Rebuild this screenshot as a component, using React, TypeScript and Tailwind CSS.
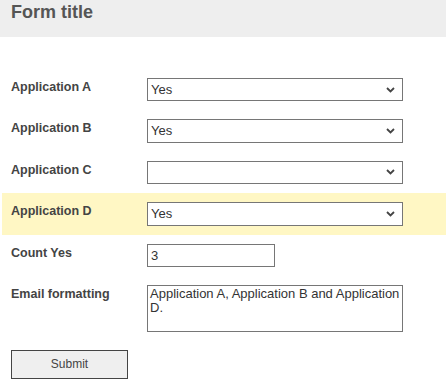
const font = { fontFamily: '"Liberation Sans", Arial, sans-serif' }

function Chevron() {
  return (
    <svg
      className="pointer-events-none absolute right-[8px] top-1/2 -translate-y-1/2"
      width="9"
      height="6"
      viewBox="0 0 9 6"
    >
      <path d="M1 1l3.5 3.5L8 1" fill="none" stroke="#444" strokeWidth="1.8" />
    </svg>
  )
}

function SelectBox({ value }: { value: string }) {
  return (
    <div className="relative w-[256px]">
      <select
        defaultValue={value}
        className="block h-[23.4px] w-full appearance-none border border-[#767676] bg-white pl-[3px] text-[13px] text-[#333] outline-none"
      >
        <option value=""></option>
        <option value="Yes">Yes</option>
        <option value="No">No</option>
      </select>
      <Chevron />
    </div>
  )
}

function Row({
  label,
  highlight,
  children,
}: {
  label: string
  highlight?: boolean
  children: React.ReactNode
}) {
  return (
    <div
      className={
        'ml-[2px] flex items-start py-[9px] pl-[9px] ' + (highlight ? 'bg-[#fff7c4]' : '')
      }
    >
      <label className="w-[136px] pt-[1px] text-[12.5px] font-bold leading-[16px] text-[#444]">
        {label}
      </label>
      {children}
    </div>
  )
}

export default function App() {
  return (
    <div className="min-h-screen bg-white" style={font}>
      <header className="h-[37px] bg-[#eeeeee] px-[11px] pt-[1px]">
        <h1 className="text-[18px] font-bold leading-[22px] text-[#555]">Form title</h1>
      </header>

      <form className="pt-[32px]" onSubmit={(e) => e.preventDefault()}>
        <Row label="Application A">
          <SelectBox value="Yes" />
        </Row>
        <Row label="Application B">
          <SelectBox value="Yes" />
        </Row>
        <Row label="Application C">
          <SelectBox value="" />
        </Row>
        <Row label="Application D" highlight>
          <SelectBox value="Yes" />
        </Row>
        <Row label="Count Yes">
          <input
            defaultValue="3"
            className="block h-[23.4px] w-[128px] border border-[#767676] px-[3px] text-[13px] text-[#333] outline-none"
          />
        </Row>
        <Row label="Email formatting">
          <textarea
            defaultValue="Application A, Application B and Application D."
            className="block h-[47px] w-[256px] resize-none border border-[#767676] px-[2px] py-[1px] text-[13px] leading-[14px] text-[#333] outline-none"
          />
        </Row>
        <div className="pl-[11px] pt-[9px]">
          <button
            type="submit"
            className="h-[29px] w-[117px] border border-[#444] bg-[#efefef] text-[12px] text-[#444]"
          >
            Submit
          </button>
        </div>
      </form>
    </div>
  )
}
